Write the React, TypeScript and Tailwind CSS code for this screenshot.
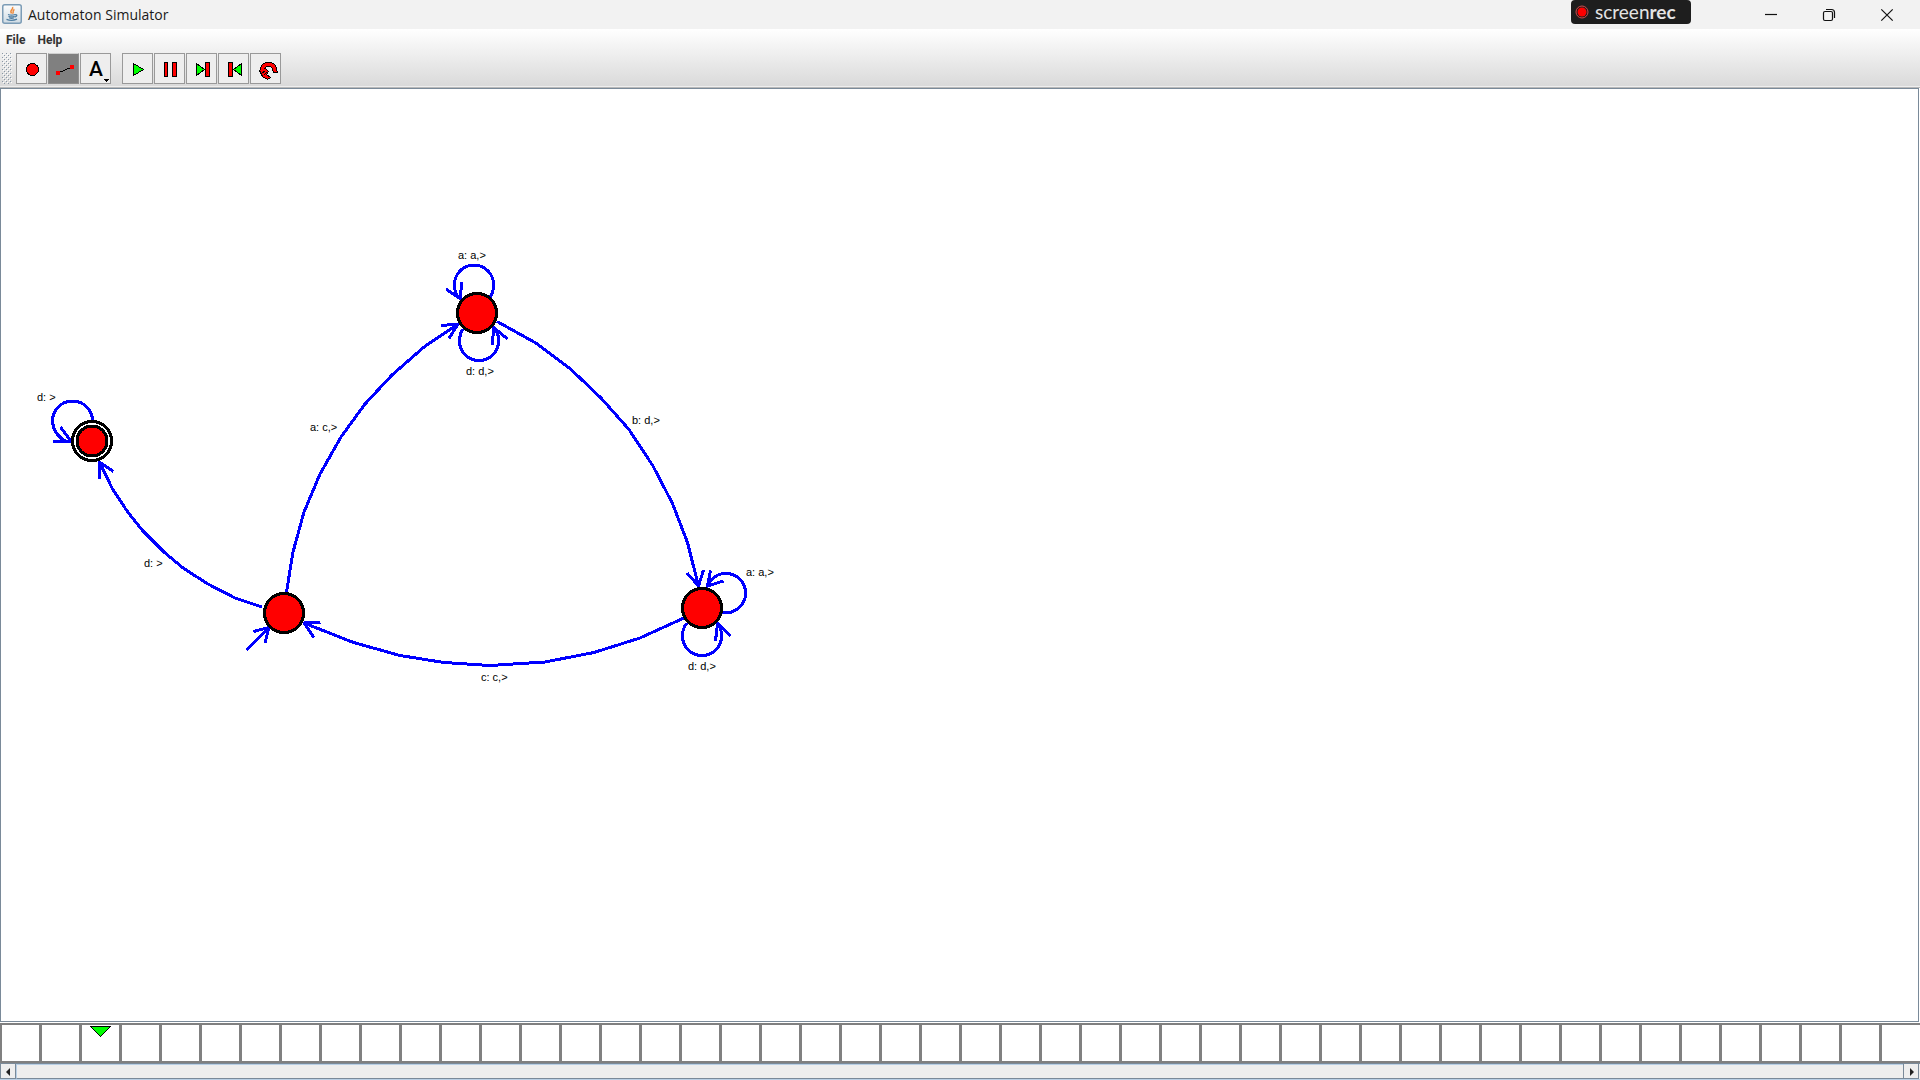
import React from "react";

type Point = [number, number];

const stroke = { fill: "none", stroke: "#0000ff", strokeWidth: 3 };

const transitions: string[] = [
  // final state loop
  "M92.5 421A20 20 0 0 0 52.5 421C53 431 58 437 66 441.5",
  // start to final
  "M262 607L235 598L208 584L183 568L164 552L143 531L127 511L112 488L100 463",
  // start marker
  "M246.5 650L269 627.5",
  // start to top
  "M286.5 592L293 552L304 512L320 474L341 437L365 404L392 375L424 347L458 324",
  // top to right
  "M497 321.5L535 342.5L570 368.5L601.5 398.5L629 429.5L653 466L672.5 503.5L687.5 542.5L698.5 586",
  // right to start
  "M684 618L640 638L594 652.5L545 662L490 665.5L444 662.5L400 655.5L353.5 642.5L304 623",
  // top state loops
  "M490.5 297C494 291 493.5 287 493.5 284.5A19.5 19.5 0 0 0 454.5 284.5Q454 294 460.5 299",
  "M463 329C459 335 459.5 338 459.5 341A19.5 19.5 0 0 0 498.5 341Q499 333 494 327.5",
  // right state loops
  "M722.5 612.5A19.7 19.7 0 1 0 707.5 586",
  "M687 623C682 629 682.5 633 682.5 636A19.5 19.5 0 0 0 721.5 636Q722 630 718 624",
];

const heads: [Point, Point, Point][] = [
  [[53, 441.5], [71, 441.5], [60.5, 427]],
  [[99.5, 479], [99.5, 462], [113.5, 471.5]],
  [[253.5, 631.5], [269, 627.5], [265, 643]],
  [[441, 325.5], [458, 324], [449, 338.5]],
  [[687, 573], [698.5, 586], [703.5, 570]],
  [[320.5, 622.5], [304, 623], [314, 637.5]],
  [[446, 289], [460.5, 299], [461.5, 282]],
  [[492.5, 345], [493.5, 327.5], [507.5, 339]],
  [[723.5, 581], [707.5, 586], [710.5, 570.5]],
  [[715.5, 641], [717.5, 623.5], [730.5, 636]],
];

const states = [
  { x: 92, y: 441, final: true },
  { x: 284, y: 613, final: false },
  { x: 477, y: 313, final: false },
  { x: 702, y: 608, final: false },
];

const labels = [
  { x: 37, y: 401, text: "d: >" },
  { x: 144, y: 567, text: "d: >" },
  { x: 310, y: 431, text: "a: c,>" },
  { x: 458, y: 259, text: "a: a,>" },
  { x: 466, y: 375, text: "d: d,>" },
  { x: 632, y: 424, text: "b: d,>" },
  { x: 746, y: 576, text: "a: a,>" },
  { x: 688, y: 670, text: "d: d,>" },
  { x: 481, y: 681, text: "c: c,>" },
];

function Diagram() {
  return (
    <svg className="block h-full w-full" aria-label="Automaton diagram">
      <g transform="translate(-1 -89)" shapeRendering="crispEdges">
        {transitions.map((d) => (
          <path key={d} d={d} {...stroke} />
        ))}
        {heads.map((p) => (
          <polyline key={p.join(" ")} points={p.map((q) => q.join(",")).join(" ")} {...stroke} />
        ))}
        {states.map((s) => (
          <g key={s.x} stroke="#000" strokeWidth="3">
            <circle cx={s.x} cy={s.y} r="19.5" fill={s.final ? "#fff" : "#f00"} />
            {s.final && <circle cx={s.x} cy={s.y} r="15" fill="#f00" />}
          </g>
        ))}
        {labels.map((l) => (
          <text key={`${l.x}-${l.y}`} x={l.x} y={l.y} className="fill-black font-['Liberation_Sans',Arial,sans-serif] text-[11px]">
            {l.text}
          </text>
        ))}
      </g>
    </svg>
  );
}

function ToolButton({ label, active, children }: { label: string; active?: boolean; children: React.ReactNode }) {
  return (
    <button
      type="button"
      aria-label={label}
      aria-pressed={active}
      className={
        active
          ? "size-[31px] border border-[#8f8f8f] border-t-[#d0d0d0] bg-[#808080]"
          : "size-[31px] border border-[#999999] bg-[#eeeeee]"
      }
    >
      <svg viewBox="1 1 29 29" className="block size-full" shapeRendering="crispEdges">
        {children}
      </svg>
    </button>
  );
}

function TitleBar() {
  return (
    <header className="relative flex h-[29px] shrink-0 items-center bg-[#f2f2f2] pr-1">
      <svg viewBox="0 0 20 20" className="-mt-px ml-[2px] size-5">
        <defs>
          <linearGradient id="tile" x1="0" y1="0" x2="0" y2="1">
            <stop offset="0" stopColor="#fdfdfd" />
            <stop offset="1" stopColor="#cfdbe4" />
          </linearGradient>
        </defs>
        <rect x="0.75" y="0.75" width="18.5" height="18.5" rx="2" fill="url(#tile)" stroke="#7c9cb6" strokeWidth="1.5" />
        <path d="M10.5 3C12 5.500 7 6 9.500 9.500M12.500 5.500C9.500 7 12.500 8 10.500 9.700" fill="none" stroke="#ee8a3c" strokeWidth="1.500" />
        <path d="M6 10.500Q9.500 11.800 13 10.500M6.500 12.300Q9.500 13.500 12.500 12.300M7.300 14Q9.500 14.800 11.800 14M13 10.800C15.500 10.200 15.500 12.500 12.700 13" fill="none" stroke="#4f7ea3" strokeWidth="1.300" />
        <path d="M4.500 15.300Q9.500 17.500 15 15.200" fill="none" stroke="#4f7ea3" strokeWidth="1.300" />
      </svg>
      <h1 className="ml-[6px] flex-1 font-['Open_Sans','Noto_Sans',sans-serif] text-[14px] leading-[29px] text-[#1a1a1a]">
        Automaton Simulator
      </h1>
      <div className="absolute top-0 right-[229px] flex h-6 w-[120px] items-center rounded-[4px] bg-[#1e1e1e] pl-1">
        <svg viewBox="0 0 14 14" className="size-[14px]">
          <circle cx="7" cy="7" r="6" fill="none" stroke="#d04a4a" />
          <circle cx="7" cy="7" r="4.500" fill="#ff0000" />
        </svg>
        <span className="ml-[6px] self-start font-[Lato,'Noto_Sans',sans-serif] text-[19px] leading-[23px] text-[#e4e4e4]">
          screen<span className="font-bold">rec</span>
        </span>
      </div>
      {[
        { label: "Minimize", icon: <path d="M0 5.500H12" /> },
        {
          label: "Restore",
          icon: (
            <>
              <rect x="0.500" y="2.500" width="9" height="9" rx="1.500" />
              <path d="M3 .5H8.500Q11.500 .5 11.500 3.500V9" />
            </>
          ),
        },
        { label: "Close", icon: <path d="M.3 .3L11.700 11.700M11.700 .3L.3 11.700" /> },
      ].map((c) => (
        <button key={c.label} type="button" aria-label={c.label} className="flex h-full w-[58px] items-center justify-center">
          <svg viewBox="0 0 12 12" className="size-3 overflow-visible" fill="none" stroke="#111" strokeWidth="1.200">
            {c.icon}
          </svg>
        </button>
      ))}
    </header>
  );
}

function ToolBar() {
  return (
    <div role="toolbar" aria-label="Tools" className="flex gap-px px-[2px] pt-[3px] pb-[2px]">
      <svg className="mr-[3px] h-[31px] w-[10px]" shapeRendering="crispEdges" aria-hidden="true">
        <defs>
          <pattern id="grip" width="4" height="4" patternUnits="userSpaceOnUse">
            <rect width="1" height="1" fill="#8a98a6" />
            <rect x="2" y="2" width="1" height="1" fill="#8a98a6" />
            <rect x="1" y="1" width="1" height="1" fill="#fff" />
            <rect x="3" y="3" width="1" height="1" fill="#fff" />
          </pattern>
        </defs>
        <rect width="10" height="31" fill="url(#grip)" />
      </svg>
      <ToolButton label="State">
        <circle cx="16.500" cy="16.500" r="6" fill="#f00" stroke="#000" />
      </ToolButton>
      <ToolButton label="Transition" active>
        <path d="M10 20L24 14" stroke="#000" />
        <rect x="8" y="18" width="4" height="4" fill="#f00" />
        <rect x="22" y="12" width="4" height="4" fill="#f00" />
      </ToolButton>
      <ToolButton label="Label">
        <text x="16" y="23" textAnchor="middle" className="fill-black font-[Roboto,sans-serif] text-[21px] font-medium">
          A
        </text>
        <path d="M23 26H29L26 29Z" fill="#000" />
      </ToolButton>
      <span className="w-[9px]" />
      <ToolButton label="Play">
        <path d="M11.500 10.500L21.500 16.500L11.500 22.500Z" fill="#0f0" stroke="#000" />
      </ToolButton>
      <ToolButton label="Pause">
        <path d="M10.500 9.500H13.500V23.500H10.500ZM18.500 9.500H22.500V23.500H18.500Z" fill="#f00" stroke="#000" />
      </ToolButton>
      <ToolButton label="Step forward">
        <path d="M10.500 10.500L18.500 16.500L10.500 22.500Z" fill="#0f0" stroke="#000" />
        <path d="M19.500 9.500H23.500V23.500H19.500Z" fill="#f00" stroke="#000" />
      </ToolButton>
      <ToolButton label="Step back">
        <path d="M23.500 10.500L15.500 16.500L23.500 22.500Z" fill="#0f0" stroke="#000" />
        <path d="M10.500 9.500H14.500V23.500H10.500Z" fill="#f00" stroke="#000" />
      </ToolButton>
      <ToolButton label="Reset">
        <path d="M25 19.500V17.500A6.500 6.500 0 0 0 12 17.500V20" fill="none" stroke="#000" strokeWidth="5" />
        <path d="M9.500 17.500L12.500 23.500L17.500 26.500L20.500 24.500L16.500 21.500L18.500 18.500L15.500 15.500Z" fill="#f00" stroke="#000" />
        <path d="M25 18.500V17.500A6.500 6.500 0 0 0 12 17.500V20" fill="none" stroke="#f00" strokeWidth="3" />
        <path d="M12 19.500L15 18.500M14 21.500L17 19.500" fill="none" stroke="#000" />
      </ToolButton>
    </div>
  );
}

const cells = Array.from({ length: 48 }, (_, i) => i);

function Tape() {
  return (
    <div className="flex h-10 shrink-0 overflow-hidden border-y-2 border-l-2 border-[#808080] bg-white">
      {cells.map((i) => (
        <div key={i} className="flex w-10 shrink-0 justify-center border-r-[3px] border-[#808080] last:border-r-0">
          {i === 2 && (
            <svg viewBox="0 0 21 11" className="mt-px h-[11px] w-[21px]" shapeRendering="crispEdges">
              <path d="M.5 .5H20.500L10.500 10.500Z" fill="#0f0" stroke="#000" />
            </svg>
          )}
        </div>
      ))}
    </div>
  );
}

function ScrollBar() {
  return (
    <div className="flex h-[17px] shrink-0 border-t border-b border-t-[#7a8a99] border-b-[#b8cfe5] bg-[#eeeeee]">
      <button type="button" aria-label="Scroll left" className="flex w-4 items-center justify-center border-x border-b border-[#7a8a99] pt-px">
        <svg viewBox="0 0 4 8" className="h-2 w-1">
          <path d="M4 0V8L0 4Z" fill="#222" />
        </svg>
      </button>
      <div className="flex-1 border-t border-b border-l border-t-[#b8cfe5] border-b-[#7a8a99] border-l-[#b8cfe5]" />
      <button type="button" aria-label="Scroll right" className="mr-px flex w-4 items-center justify-center border-x border-b border-[#7a8a99] pt-px pl-px">
        <svg viewBox="0 0 4 8" className="h-2 w-1">
          <path d="M0 0V8L4 4Z" fill="#222" />
        </svg>
      </button>
    </div>
  );
}

export default function App() {
  return (
    <div className="flex h-screen flex-col overflow-hidden bg-white">
      <TitleBar />
      <div className="shrink-0 border-b border-[#b8b8b8] bg-linear-to-b from-white to-[#d9d9d9]">
        <nav className="flex h-[21px] items-center gap-3 pl-[6px] font-[Roboto,'Liberation_Sans',sans-serif] text-[12px] font-bold text-[#333333]">
          <button type="button">File</button>
          <button type="button">Help</button>
        </nav>
        <ToolBar />
        <div className="h-px bg-[#eeeeee]" />
      </div>
      <main className="mr-px mb-px min-h-0 flex-1 border border-[#7a8a99] bg-white">
        <Diagram />
      </main>
      <Tape />
      <ScrollBar />
    </div>
  );
}
